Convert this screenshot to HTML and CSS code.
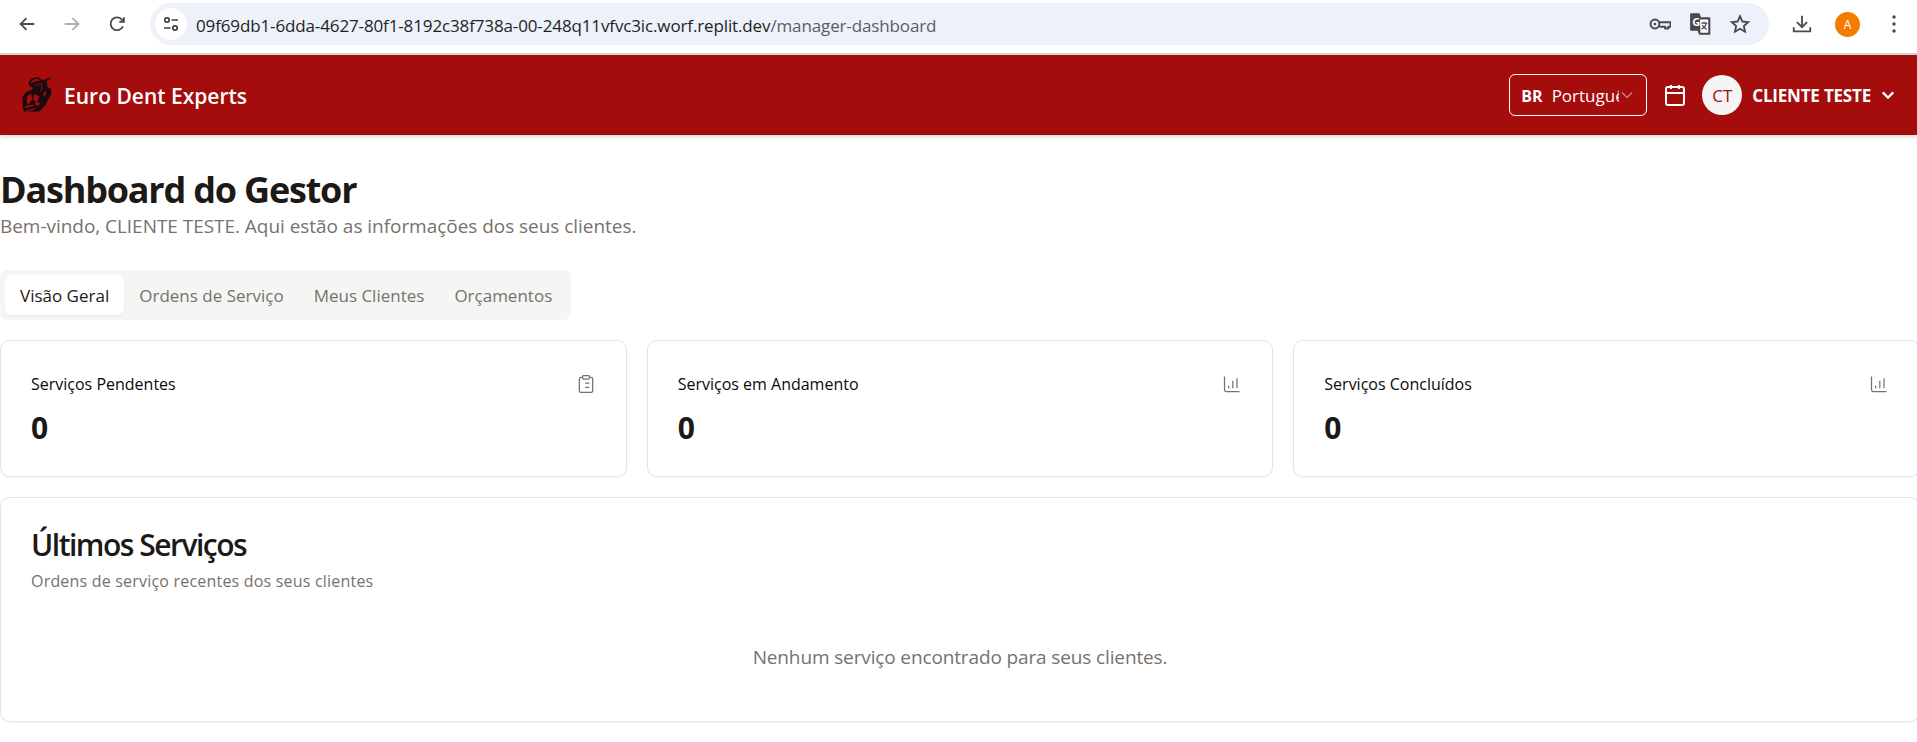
FILE: index.html
```html
<!DOCTYPE html>
<html lang="pt-BR">
<head>
<meta charset="utf-8">
<title>Euro Dent Experts</title>
<link rel="stylesheet" href="styles.css">
</head>
<body>
<div class="chrome">
  <div class="nav">
    <svg class="ci" viewBox="0 0 24 24"><path d="M20 12H5M11.500 5.500 5 12l6.500 6.500" class="s"/></svg>
    <svg class="ci dim" viewBox="0 0 24 24"><path d="M4 12h15M12.500 5.500 19 12l-6.500 6.500" class="s"/></svg>
    <svg class="ci" viewBox="0 0 24 24"><path d="M18.500 14.500a7 7 0 1 1-1-7.200L19.500 9.500M19.500 4.500v5h-5" class="s"/></svg>
  </div>
  <div class="omni">
    <span class="tune"><svg viewBox="0 0 20 20"><circle cx="6" cy="6" r="2.200" class="s2"/><path d="M10.500 6H17M3 14h6.500" class="s2"/><circle cx="14" cy="14" r="2.200" class="s2"/></svg></span>
    <span class="url">09f69db1-6dda-4627-80f1-8192c38f738a-00-248q11vfvc3ic.worf.replit.dev<span class="path">/manager-dashboard</span></span>
    <span class="omni-icons">
      <svg class="oi" viewBox="0 0 24 24"><circle cx="6.500" cy="12" r="4.800" class="s k"/><circle cx="6.500" cy="12" r="1.500" fill="currentColor"/><path d="M11.500 10h12v5h-2.500v2H17.500v-2h-6" class="s k"/></svg>
      <svg class="oi" viewBox="0 0 24 24"><path d="M2 1h9l1.500 4.500H22.500V23H11.500L10 18.500H2z" class="gt"/><path d="M12 7h9v14.500H12.500z" fill="#fff"/><text x="3.500" y="14" class="gl">G</text><path d="M13.500 11h6.500M16.500 9.500v1.500M18.800 11c-.5 3-2.800 5.500-5.300 6.500M14.500 13c1 2 3 4 5 5" class="sm"/></svg>
      <svg class="oi" viewBox="0 0 24 24"><path d="m12 3.500 2.600 5.800 6.300.7-4.700 4.200 1.300 6.200L12 17.200l-5.500 3.200 1.300-6.200L3.100 10l6.300-.7z" class="s"/></svg>
    </span>
  </div>
  <div class="chrome-right">
    <svg class="ci" viewBox="0 0 24 24"><path d="M12 3v12M6.500 10l5.500 5.500 5.500-5.500M3 15.500V20h18v-4.500" class="s"/></svg>
    <span class="profile">A</span>
    <svg class="dots" viewBox="0 0 6 20"><circle cx="3" cy="3" r="1.700"/><circle cx="3" cy="10" r="1.700"/><circle cx="3" cy="17" r="1.700"/></svg>
  </div>
</div>

<header class="topbar">
  <div class="brand">
    <svg class="logo" viewBox="0 0 40 44">
      <path class="logo-dark" d="M9.500 11C10 7 13 4.500 18 4.500c2.500 0 4 1 5 3l8.500-3 .5 1-4.500 3 1.500 6.500 2.500.5 1 1.500-.5 5.500-3 4-2 5-5 5.500-2 1.500H5l-1-3-.5-9c0-5 4-8.500 9-9.500l1.500-2.500c-2-.5-4-1.500-4.500-3z"/>
      <path class="logo-red" d="M11.500 10.500c.5-2.500 3.500-4.500 6.500-4.500 1.500 0 2.500.5 3 1.500-3.500.5-6.500 1.500-9.500 3zM8 24c1-1.500 2-2.500 4-3l1.500 5-3.500 5-2.500-1zM15.500 21l5 2.500-2.500 5.500-4-2.500zM6 33l8.500-1.500.5 1.500-9 2zM7 37.500l10-2.500-1 1.500-9 2zM17 28.500l4 1.500-1.500 3-4-1.500zM25 19l2.500-.5-1 3.500-2.500 1z"/>
      <path class="logo-line" d="M16 13l6-3 1 5-2 3"/>
    </svg>
    <span class="brand-name">Euro Dent Experts</span>
  </div>
  <div class="top-actions">
    <div class="lang">
      <span class="lang-code">BR</span>
      <span class="lang-name">Português</span>
      <svg class="lang-chev" viewBox="0 0 16 16"><path d="m3 5.500 5 5 5-5"/></svg>
    </div>
    <svg class="cal" viewBox="0 0 24 24"><rect x="3" y="4" width="18" height="18" rx="2"/><path d="M16 2v4M8 2v4M3 10h18"/></svg>
    <span class="avatar">CT</span>
    <span class="user">CLIENTE TESTE</span>
    <svg class="user-chev" viewBox="0 0 24 24"><path d="m5 8.500 7 7 7-7"/></svg>
  </div>
</header>

<main class="page">
  <h1 class="title">Dashboard do Gestor</h1>
  <p class="subtitle">Bem-vindo, CLIENTE TESTE. Aqui estão as informações dos seus clientes.</p>

  <nav class="tabs">
    <span class="tab active">Visão Geral</span>
    <span class="tab">Ordens de Serviço</span>
    <span class="tab">Meus Clientes</span>
    <span class="tab">Orçamentos</span>
  </nav>

  <section class="stats">
    <article class="card stat">
      <div class="stat-head">
        <span class="stat-label">Serviços Pendentes</span>
        <svg class="stat-icon" viewBox="0 0 24 24"><rect x="8" y="2" width="8" height="4" rx="1"/><path d="M16 4h2a2 2 0 0 1 2 2v14a2 2 0 0 1-2 2H6a2 2 0 0 1-2-2V6a2 2 0 0 1 2-2h2M11 11h5M11 16h5M8 11h.01M8 16h.01"/></svg>
      </div>
      <div class="stat-value">0</div>
    </article>
    <article class="card stat">
      <div class="stat-head">
        <span class="stat-label">Serviços em Andamento</span>
        <svg class="stat-icon" viewBox="0 0 24 24"><path d="M3 3v16a2 2 0 0 0 2 2h16M8 17v-3M13 17V8M18 17V5"/></svg>
      </div>
      <div class="stat-value">0</div>
    </article>
    <article class="card stat">
      <div class="stat-head">
        <span class="stat-label">Serviços Concluídos</span>
        <svg class="stat-icon" viewBox="0 0 24 24"><path d="M3 3v16a2 2 0 0 0 2 2h16M8 17v-3M13 17V8M18 17V5"/></svg>
      </div>
      <div class="stat-value">0</div>
    </article>
  </section>

  <section class="card recent">
    <h2 class="recent-title">Últimos Serviços</h2>
    <p class="recent-sub">Ordens de serviço recentes dos seus clientes</p>
    <p class="empty">Nenhum serviço encontrado para seus clientes.</p>
  </section>
</main>
</body>
</html>
```

FILE: styles.css
```css
* { box-sizing: border-box; }
html, body { margin: 0; padding: 0; height: 100%; overflow: hidden; background: #fff; }
body { font-family: "Open Sans", "Noto Sans", sans-serif; color: #1c1917; width: 1917px; }
p, h1, h2 { margin: 0; }

.s { fill: none; stroke: currentColor; stroke-width: 2; }
.k { stroke-width: 2.200; stroke-linejoin: round; }
.s2 { fill: none; stroke: #3c4043; stroke-width: 1.700; }
.sm { fill: none; stroke: #47494c; stroke-width: 1.300; }
.gt { fill: #47494c; stroke: #47494c; stroke-width: 1.500; stroke-linejoin: round; }
.gl { font: 700 12px "Open Sans", sans-serif; fill: #fff; }

.chrome { height: 55px; display: flex; align-items: center; padding: 0 0 5px 16px; border-bottom: 2px solid #d6d6d6; background: #fff; }
.nav { display: flex; gap: 23px; width: 134px; color: #4a4c4f; }
.ci { width: 22px; height: 22px; color: #4a4c4f; flex: none; }
.dim { color: #acaeb1; }
.omni { width: 1619px; height: 42px; border-radius: 21px; background: #ecf1fa; display: flex; align-items: center; padding: 0 18px 0 5px; flex: none; }
.tune { width: 32px; height: 32px; border-radius: 50%; background: #fff; display: flex; align-items: center; justify-content: center; flex: none; }
.tune svg { width: 20px; height: 20px; }
.url { margin-left: 9px; padding-top: 2px; font-size: 17px; letter-spacing: -.13px; color: #1f1f1f; flex: 1; white-space: nowrap; }
.path { color: #5a5e62; }
.omni-icons { display: flex; gap: 18px; color: #474a4d; }
.oi { width: 22px; height: 22px; }
.chrome-right { display: flex; align-items: center; color: #474a4d; margin-left: 22px; }
.profile { width: 25px; height: 25px; border-radius: 50%; background: #f57c00; color: #fff; font-size: 12px; display: flex; align-items: center; justify-content: center; margin-left: 22px; }
.dots { width: 6px; height: 20px; fill: #474a4d; margin-left: 31px; }

.topbar { height: 80px; background: #a50c0c; display: flex; align-items: center; justify-content: space-between; padding: 0 20px 0 19px; color: #fff; box-shadow: 0 2px 4px rgba(0,0,0,.16); }
.brand { display: flex; align-items: center; gap: 5px; }
.logo { width: 40px; height: 44px; }
.logo-dark { fill: #1d0a0c; }
.logo-red { fill: #a50c0c; }
.logo-line { fill: none; stroke: #a50c0c; stroke-width: .8; }
.brand-name { font-size: 21px; font-weight: 600; padding-top: 2px; }
.top-actions { display: flex; align-items: center; }
.lang { width: 138px; height: 42px; border: 1px solid #fff; border-radius: 6px; display: flex; align-items: center; padding-left: 11px; overflow: hidden; }
.lang-code { font-size: 16px; font-weight: 700; padding-top: 1px; }
.lang-name { font-size: 17px; margin-left: 9px; width: 67px; overflow: hidden; white-space: nowrap; }
.lang-chev { width: 16px; height: 16px; fill: none; stroke: #fff; stroke-width: 1.200; opacity: .5; flex: none; }
.cal { width: 24px; height: 24px; margin-left: 16px; fill: none; stroke: #fff; stroke-width: 2; }
.avatar { width: 40px; height: 40px; border-radius: 50%; background: #f4f4f5; color: #a50c0c; font-size: 17px; display: flex; align-items: center; justify-content: center; margin-left: 15px; flex: none; }
.user { font-size: 17px; font-weight: 700; margin-left: 10px; white-space: nowrap; letter-spacing: -.2px; }
.user-chev { width: 18px; height: 18px; margin-left: 8px; fill: none; stroke: #fff; stroke-width: 3; }

.page { display: flex; flex-direction: column; padding-top: 33px; width: 1920px; }
.title { font-size: 36px; line-height: 44px; font-weight: 700; letter-spacing: -1.2px; }
.subtitle { font-size: 19px; line-height: 24px; margin-top: 2px; color: #78716c; letter-spacing: -.04px; }

.tabs { display: flex; align-self: flex-start; margin-top: 32px; height: 50px; padding: 5px; width: 571px; background: #f5f5f4; border-radius: 8px; }
.tab { height: 40px; display: flex; align-items: center; padding: 0 15px; font-size: 17px; font-weight: 500; color: #78716c; border-radius: 6px; white-space: nowrap; }
.tab.active { background: #fff; color: #1c1917; box-shadow: 0 1px 2px rgba(0,0,0,.05); }

.card { background: #fff; border: 1px solid #e7e5e4; border-radius: 10px; box-shadow: 0 1px 2px rgba(0,0,0,.05); }
.stats { display: grid; grid-template-columns: repeat(3, 1fr); gap: 20px; margin-top: 20px; }
.stat { height: 137px; padding: 31px 30px; }
.stat-head { display: flex; justify-content: space-between; align-items: center; height: 24px; }
.stat-label { font-size: 16px; font-weight: 500; color: #0c0a09; }
.stat-icon { width: 20px; height: 20px; fill: none; stroke: #78716c; stroke-width: 1.500; }
.stat-value { font-size: 30px; line-height: 36px; font-weight: 700; margin-top: 14px; }

.recent { margin-top: 20px; height: 225px; padding: 29px 30px 30px; }
.recent-title { font-size: 30px; font-weight: 600; line-height: 36px; letter-spacing: -1.500px; }
.recent-sub { font-size: 16px; line-height: 24px; margin-top: 6px; color: #78716c; letter-spacing: .2px; }
.empty { font-size: 19px; line-height: 28px; margin-top: 50px; text-align: center; color: #78716c; letter-spacing: -.13px; }
```
